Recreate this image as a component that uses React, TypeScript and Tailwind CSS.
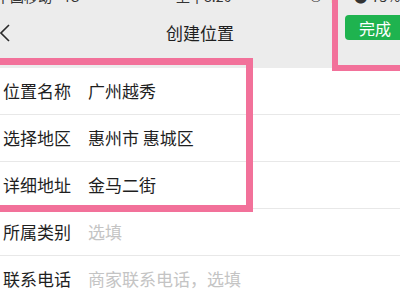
import React from "react";

const rows: { label: string; value: string; placeholder?: boolean }[] = [
  { label: "位置名称", value: "广州越秀" },
  { label: "选择地区", value: "惠州市 惠城区" },
  { label: "详细地址", value: "金马二街" },
  { label: "所属类别", value: "选填", placeholder: true },
  { label: "联系电话", value: "商家联系电话，选填", placeholder: true },
];

export default function App() {
  return (
    <div
      className="relative w-[400px] h-[300px] overflow-hidden bg-white text-[#1f1f1f]"
      style={{ fontFamily: '"Noto Sans CJK SC", "Noto Sans", sans-serif' }}
    >
      <div className="h-[68px] bg-[#ececec] flex flex-col">
        <div className="h-[8px] relative overflow-hidden text-[14px] text-[#333]">
          <div className="absolute left-[-4px] top-[-14px] flex items-center gap-[10px]">
            <span>中国移动</span>
            <span>4G</span>
          </div>
          <div className="absolute left-[176px] top-[-14px]">上午8:26</div>
          <div className="absolute left-[310px] top-[-14px] flex items-center gap-[4px]">
            <span>©</span>
            <span>↑</span>
            <span className="ml-[10px]">●</span>
            <span>75%</span>
          </div>
        </div>
        <div className="flex-1 flex items-center relative">
          <svg className="absolute left-0 top-[15px]" width="12" height="22" viewBox="0 0 12 22">
            <path d="M9 2 L1 10 L9 18" fill="none" stroke="#2a2a2a" strokeWidth="1.6" />
          </svg>
          <div className="w-full text-center text-[17px] mt-[-10px]">创建位置</div>
          <div className="absolute left-[345px] top-[7px] w-[70px] h-[25px] rounded-[4px] bg-[#1fb34f] text-white text-[16px] flex items-center pl-[14px]">
            完成
          </div>
        </div>
      </div>
      <div className="flex flex-col">
        {rows.map((r) => (
          <div
            key={r.label}
            className="h-[47px] border-b border-[#e8e8e8] flex items-center pl-[3px] text-[17px]"
          >
            <span className="w-[85px] shrink-0">{r.label}</span>
            <span className={r.placeholder ? "text-[#c4c4c4]" : ""}>{r.value}</span>
          </div>
        ))}
      </div>
      <div className="absolute left-[-10px] top-[58px] w-[263px] h-[154px] border-[7px] border-[#f2719a]" />
      <div className="absolute left-[332px] top-[-10px] w-[80px] h-[81px] border-[6px] border-[#f2719a]" />
    </div>
  );
}
